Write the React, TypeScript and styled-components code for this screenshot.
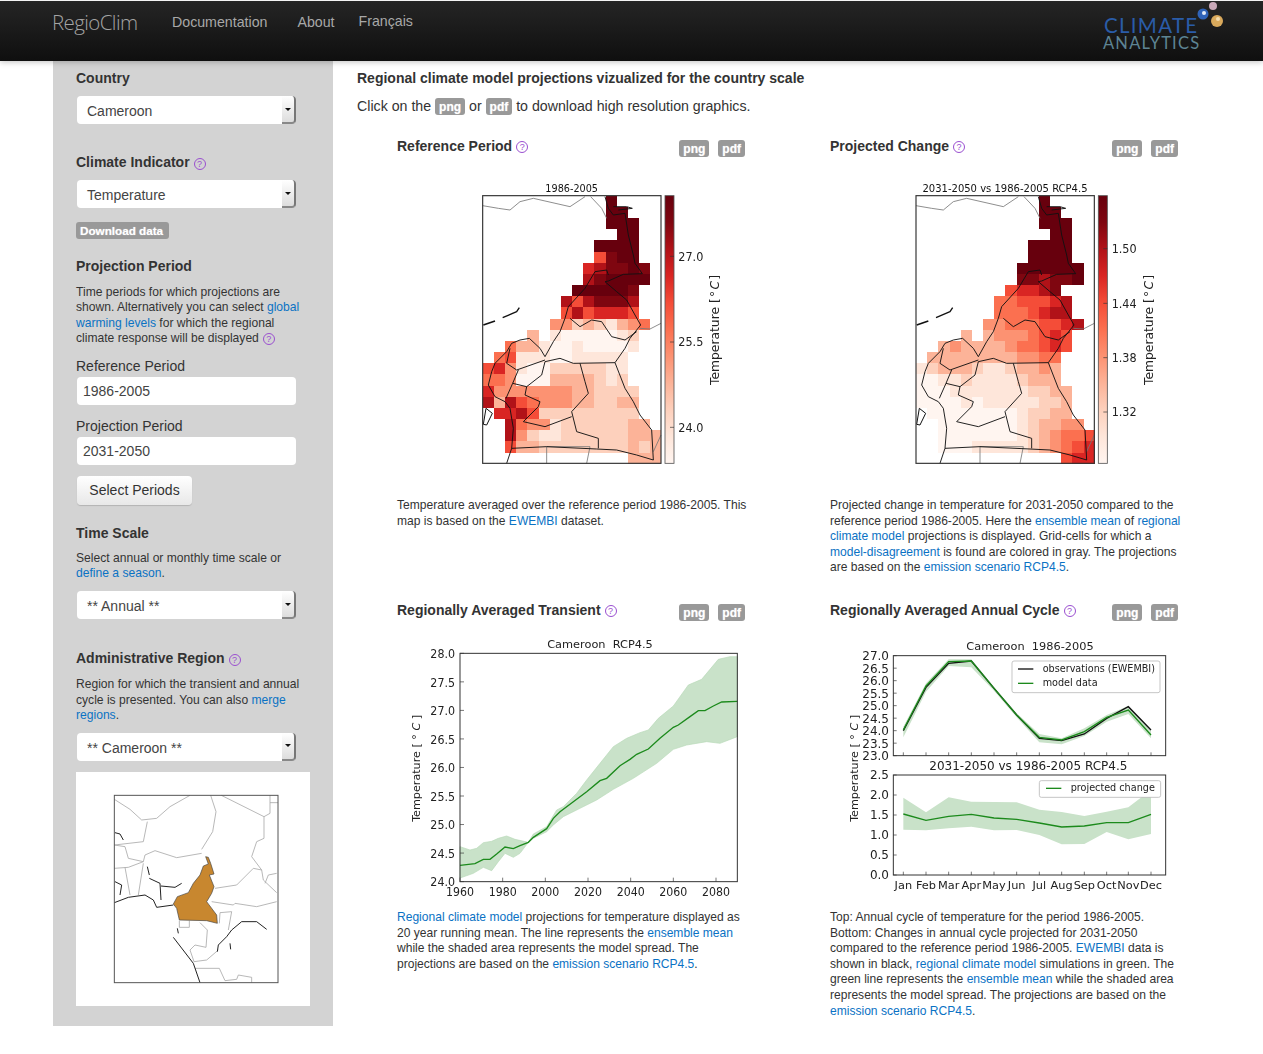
import React from 'react';
import styled, { createGlobalStyle } from 'styled-components';

const GlobalStyle = createGlobalStyle`
  html, body {
    margin: 0;
    padding: 0;
    background: #fff;
    font-family: "Liberation Sans", Arial, sans-serif;
    color: #333;
  }
`;

const Page = styled.div`
  width: 1263px;
  height: 1054px;
  overflow: hidden;
`;

const NavBar = styled.header`
  height: 60px;
  border-top: 1px solid #f4f4f4;
  background: linear-gradient(#252525, #0f0f0f);
  box-shadow: 0 1px 6px rgba(0, 0, 0, 0.25);
  display: flex;
  align-items: flex-start;
  position: relative;
`;

const Brand = styled.div`
  margin-left: 52px;
  margin-top: 8px;
  width: 120px;
  font-size: 20.5px;
  line-height: 26px;
  letter-spacing: -0.6px;
  color: #a4a4a4;
  font-family: "Open Sans", "Liberation Sans", sans-serif;
  font-weight: 300;
`;

const NavLink = styled.a<{ $left: number; $top?: number }>`
  margin-left: ${(p) => p.$left}px;
  margin-top: ${(p) => p.$top ?? 12}px;
  font-size: 14.2px;
  line-height: 18px;
  color: #a8a8a8;
`;

const LogoSlot = styled.div`
  margin-left: auto;
  margin-right: 32px;
  width: 130px;
  height: 60px;
`;

const Main = styled.div`
  display: flex;
  align-items: flex-start;
`;

const Sidebar = styled.aside`
  width: 257px;
  height: 958px;
  margin-left: 53px;
  padding: 7px 0 0 23px;
  background: #d3d3d3;
`;

const Heading = styled.h4<{ $top?: number }>`
  margin: ${(p) => p.$top ?? 0}px 0 0;
  font-size: 14px;
  line-height: 20px;
  font-weight: bold;
  color: #333;
`;

const SideText = styled.p<{ $top?: number }>`
  margin: ${(p) => p.$top ?? 0}px 0 0;
  width: 228px;
  font-size: 12.1px;
  line-height: 15.4px;
  color: #333;
`;

const Link = styled.a`
  color: #0a72c4;
`;

const HelpMark = styled.span`
  display: inline-block;
  box-sizing: border-box;
  width: 12px;
  height: 12px;
  margin-left: 4px;
  border: 1px solid #9a4fd0;
  border-radius: 50%;
  color: #9a4fd0;
  font-size: 9px;
  line-height: 10px;
  font-weight: normal;
  text-align: center;
  vertical-align: 0;
`;

const SelectBox = styled.div<{ $top?: number }>`
  box-sizing: border-box;
  width: 219px;
  height: 28px;
  margin: ${(p) => p.$top ?? 0}px 0 0 1px;
  display: flex;
  align-items: center;
  justify-content: space-between;
  background: #fff;
  border-radius: 4px;
  font-size: 14px;
  color: #444;
`;

const SelectValue = styled.span`
  padding: 2px 0 0 10px;
`;

const SelectArrow = styled.span`
  box-sizing: border-box;
  width: 14px;
  height: 28px;
  display: flex;
  align-items: center;
  justify-content: center;
  background: linear-gradient(#fff, #ddd);
  border-right: 2px solid #777;
  border-bottom: 2px solid #888;
  border-radius: 0 4px 4px 0;
  &::after {
    content: '';
    border-left: 3px solid transparent;
    border-right: 3px solid transparent;
    border-top: 3px solid #111;
  }
`;

const FieldLabel = styled.div<{ $top: number }>`
  margin-top: ${(p) => p.$top}px;
  font-size: 14px;
  line-height: 18px;
  color: #333;
`;

const TextInput = styled.div`
  box-sizing: border-box;
  width: 219px;
  height: 28px;
  margin: 2px 0 0 1px;
  padding-left: 6px;
  background: #fff;
  border-radius: 4px;
  font-size: 14px;
  line-height: 28px;
  color: #444;
`;

const SelectButton = styled.div`
  box-sizing: border-box;
  width: 115px;
  height: 29px;
  margin: 11px 0 0 1px;
  background: linear-gradient(#fff, #e8e8e8);
  border-radius: 4px;
  box-shadow: 0 1px 1px rgba(0, 0, 0, 0.15);
  font-size: 14px;
  line-height: 29px;
  text-align: center;
  color: #333;
`;

const Badge = styled.span`
  display: inline-block;
  height: 17px;
  padding: 0 4px;
  background: #999;
  border-radius: 3px;
  color: #fff;
  font-size: 12px;
  line-height: 18px;
  font-weight: bold;
  text-shadow: 0 0 1px rgba(255, 255, 255, 0.6);
`;

const DownloadBadge = styled(Badge)`
  display: block;
  width: 85px;
  margin-top: 14px;
  font-size: 11.7px;
`;

const LocatorBox = styled.div`
  width: 234px;
  height: 234px;
  margin-top: 11px;
  background: #fff;
  svg {
    display: block;
    filter: blur(0.3px);
  }
`;

const Content = styled.main`
  margin-left: 24px;
  padding-top: 7px;
`;

const PageTitle = styled.h1`
  margin: 0;
  font-size: 14px;
  line-height: 20px;
  font-weight: bold;
  color: #333;
`;

const Intro = styled.p`
  margin: 8px 0 0;
  font-size: 14.2px;
  line-height: 20px;
  color: #333;
`;

const PanelGrid = styled.div`
  display: grid;
  grid-template-columns: 348px 348px;
  grid-template-rows: 464px auto;
  column-gap: 85px;
  margin: 21px 0 0 40px;
`;

const Panel = styled.section``;

const PanelHead = styled.div`
  display: flex;
  align-items: center;
  height: 20px;
`;

const PanelTitle = styled.h3`
  margin: 0 0 2px;
  font-size: 14px;
  line-height: 20px;
  font-weight: bold;
  color: #333;
`;

const Downloads = styled.div`
  margin: 2px 0 0 auto;
  display: flex;
  gap: 9px;
`;

const Figure = styled.div<{ $left: number; $height: number; $top: number }>`
  margin: ${(p) => p.$top}px 0 0 ${(p) => p.$left}px;
  height: ${(p) => p.$height}px;
  svg {
    display: block;
    filter: blur(0.35px);
  }
`;

const Caption = styled.p<{ $top: number }>`
  margin: ${(p) => p.$top}px 0 0;
  width: 352px;
  font-size: 12.05px;
  line-height: 15.6px;
  color: #333;
`;

const PALETTE = ['#fff5f0', '#fee6da', '#fdd0bc', '#fcb398', '#fc9272', '#fb7050', '#f44d38', '#d92523', '#b11218', '#7f0610', '#67000d'];
const CHART_FONT = '"DejaVu Sans", sans-serif';

const REF_GRID = [
  '...........a....',
  '...........aa...',
  '...........aaa..',
  '............aa..',
  '..........aaaa..',
  '..........69aa..',
  '.........7899a9.',
  '.........89aaaa.',
  '........aaaaa9..',
  '.......8689998..',
  '.......6867776..',
  '......442321345.',
  '....3.10000012..',
  '..533100100001..',
  '.561110011111...',
  '6741002222211...',
  '5540003333212...',
  '74444444332222..',
  '83865444332233..',
  '.7786222222222..',
  '..8544122222233.',
  '..84211222222333',
  '..63322222222323',
  '.............333',
];

const CHANGE_GRID = [
  '...........a....',
  '...........aa...',
  '...........aaa..',
  '............aa..',
  '..........aaaa..',
  '..........aaaa..',
  '.........aaaaaa.',
  '.........99899a.',
  '........67789...',
  '.......5566678..',
  '.......5556788..',
  '......445556678.',
  '....3.34445676..',
  '..343333455676..',
  '.333333334455...',
  '1233321123343...',
  '0011211112333...',
  '00011111112233..',
  '00001011111223..',
  '.0000000012233..',
  '..0000000123344.',
  '..00000001234556',
  '..00011111234567',
  '.............677',
];

const BLACK_LINES = [
  '405,65 415,100 430,120 465,115 475,180 490,240 495,265 517,296 460,298 415,318 405,320 440,350 470,375 495,420 512,450 480,490 465,520 435,563 465,640 490,680 510,720 545,765 550,855 500,840 440,825 380,822 230,815 125,820 130,760 120,700 105,680 75,665 55,630 65,590 75,565 110,530 125,505 150,495 178,490 210,520 225,545 250,500 270,470 285,430 295,395 345,340 375,290 410,285 415,300',
  '300,430 330,455 365,435 395,440 425,485 465,495 500,470',
  '225,560 270,550 310,565 435,563',
  '330,565 345,620 355,655 305,710 320,770 385,790 385,820',
  '120,520 110,565 140,585 225,555',
  '145,585 128,625 170,635 215,600 225,560',
  '128,625 108,670',
  '170,635 165,660 210,680 205,695 160,740 225,755 305,725',
  '125,820 110,865',
  '430,95 470,95 487,100 445,105',
];

const GRAY_LINES = [
  '38,92 85,100 120,105 150,80 190,70 300,95 345,65',
  '362,65 395,100 410,130',
  '510,460 540,462 573,445',
  '230,865 230,815 360,815 350,865',
  '573,780 550,830',
];

const AxisLabel: React.FC<{ x: number; y: number }> = ({ x, y }) => (
  <text transform={`translate(${x} ${y}) rotate(-90)`} fontFamily={CHART_FONT} fontSize={33.5} textAnchor="middle" fill="#222">
    Temperature [ ° <tspan fontStyle="italic">C</tspan> ]
  </text>
);

const MapAxisLabel: React.FC<{ x: number }> = ({ x }) => (
  <text transform={`translate(${x} 465) rotate(-90)`} fontFamily={CHART_FONT} fontSize={37} textAnchor="middle" fill="#222">
    {'Temperature [\u200a°\u200a'}<tspan fontStyle="italic">C</tspan>{'\u200a]'}
  </text>
);

const HeatMap: React.FC<{ grid: string[]; title: string; axisLeft: number; ticks: [string, number][]; colorLeft: number; titleSize: number }> = ({
  grid,
  title,
  axisLeft,
  ticks,
  colorLeft,
  titleSize,
}) => {
  const dx = axisLeft - 38;
  return (
    <svg width={270} height={300} viewBox="0 0 810 900">
      <defs>
        <linearGradient id={`bar${axisLeft}`} x1="0" y1="1" x2="0" y2="0">
          {PALETTE.map((c, i) => (
            <stop key={c} offset={i / 10} stopColor={c} />
          ))}
        </linearGradient>
      </defs>
      <text x={axisLeft + 267} y={50} fontFamily={CHART_FONT} fontSize={titleSize} textAnchor="middle" fill="#111">
        {title}
      </text>
      <g shapeRendering="crispEdges">
        {grid.map((row, r) =>
          row.split('').map((ch, c) =>
            ch === '.' ? null : (
              <rect
                key={`${r}-${c}`}
                x={axisLeft + c * 33.5}
                y={62 + r * 33.5}
                width={33.5}
                height={33.5}
                fill={PALETTE[parseInt(ch, 16)]}
              />
            ),
          ),
        )}
      </g>
      <g fill="none" strokeLinejoin="round" transform={`translate(${dx} 0)`}>
        {GRAY_LINES.map((p) => (
          <polyline key={p} points={p} stroke="#777" strokeWidth={2.5} />
        ))}
        {BLACK_LINES.map((p) => (
          <polyline key={p} points={p} stroke="#111" strokeWidth={2.8} />
        ))}
        <polyline points="40,450 75,438" stroke="#111" strokeWidth={5} />
        <polyline points="98,428 140,410 148,398" stroke="#111" strokeWidth={4} />
        <polygon points="48,700 67,715 50,750 40,748" stroke="#111" strokeWidth={3} fill="#fff" />
      </g>
      <rect x={axisLeft} y={62} width={535} height={803} fill="none" stroke="#333" strokeWidth={3.5} />
      <rect x={colorLeft} y={62} width={27} height={803} fill={`url(#bar${axisLeft})`} stroke="#555" strokeWidth={2.5} />
      {ticks.map(([label, y]) => (
        <g key={label}>
          <line x1={colorLeft + 15} x2={colorLeft + 27} y1={y} y2={y} stroke="#333" strokeWidth={2} />
          <text x={colorLeft + 40} y={y + 13} fontFamily={CHART_FONT} fontSize={36} textLength={75} lengthAdjust="spacingAndGlyphs" fill="#222">
            {label}
          </text>
        </g>
      ))}
      <MapAxisLabel x={colorLeft + 163} />
    </svg>
  );
};

const pts = (list: number[][]) => list.map((p) => p.join(',')).join(' ');

const TR_MEAN = [[180,706],[225,701],[250,688],[270,688],[290,672],[315,651],[340,656],[360,647],[385,637],[400,622],[440,596],[460,565],[480,545],[520,515],[560,485],[600,452],[620,445],[660,407],[690,388],[710,373],[745,357],[780,325],[820,292],[835,285],[870,260],[895,242],[915,242],[940,228],[965,216],[1012,214]];
const TR_UP = [[180,650],[210,660],[230,655],[250,638],[275,634],[295,625],[320,618],[345,628],[385,637],[400,612],[440,590],[470,540],[490,530],[530,490],[560,450],[600,400],[640,350],[680,325],[720,308],[745,300],[775,265],[820,228],[865,165],[905,148],[955,88],[990,80],[1012,80]];
const TR_LOW = [[180,744],[220,730],[250,712],[275,722],[295,695],[315,670],[340,682],[360,670],[385,637],[400,625],[440,605],[460,585],[490,560],[540,535],[590,510],[640,478],[700,445],[770,400],[820,358],[860,345],[920,335],[960,340],[1012,320]];

const TransientChart: React.FC = () => (
  <svg width={350} height={270} viewBox="0 0 1050 810" fontFamily={CHART_FONT} fill="#222">
    <text x={600} y={53} fontSize={34} textAnchor="middle">{'Cameroon\u00a0\u00a0RCP4.5'}</text>
    <polygon points={pts([...TR_UP, ...[...TR_LOW].reverse()])} fill="#c9e2c9" stroke="#b8d9b8" strokeWidth={2} />
    <polyline points={pts(TR_MEAN)} fill="none" stroke="#1c8a1c" strokeWidth={4} />
    <rect x={180} y={70} width={832} height={685} fill="none" stroke="#333" strokeWidth={3} />
    {['28.0', '27.5', '27.0', '26.5', '26.0', '25.5', '25.0', '24.5', '24.0'].map((t, i) => (
      <g key={t}>
        <line x1={180} x2={192} y1={70 + i * 85.6} y2={70 + i * 85.6} stroke="#333" strokeWidth={2} />
        <text x={165} y={84 + i * 85.6} fontSize={38} textAnchor="end" textLength={74} lengthAdjust="spacingAndGlyphs">{t}</text>
      </g>
    ))}
    {[1960, 1980, 2000, 2020, 2040, 2060, 2080].map((t, i) => (
      <g key={t}>
        <line x1={180 + i * 128} x2={180 + i * 128} y1={755} y2={743} stroke="#333" strokeWidth={2} />
        <text x={180 + i * 128} y={798} fontSize={38} textAnchor="middle" textLength={84} lengthAdjust="spacingAndGlyphs">{t}</text>
      </g>
    ))}
    <AxisLabel x={60} y={415} />
  </svg>
);

const MONTH_X = [190, 258, 326, 394, 462, 530, 598, 665, 733, 800, 865, 933];
const MONTHS = ['Jan', 'Feb', 'Mar', 'Apr', 'May', 'Jun', 'Jul', 'Aug', 'Sep', 'Oct', 'Nov', 'Dec'];
const series = (ys: number[]) => ys.map((y, i) => [MONTH_X[i], y]);
const back = (ys: number[]) => series(ys).reverse();

const OBS = [302, 172, 100, 93, 175, 255, 325, 332, 312, 265, 230, 300];
const MODEL = [300, 168, 95, 93, 175, 255, 322, 330, 305, 262, 240, 315];
const MODEL_UP = [290, 160, 88, 88, 170, 250, 312, 325, 295, 255, 228, 300];
const MODEL_LOW = [322, 185, 108, 112, 182, 262, 337, 343, 318, 275, 252, 325];
const CH_MEAN = [552, 571, 559, 553, 564, 568, 579, 591, 588, 578, 578, 553];
const CH_UP = [503, 547, 502, 515, 516, 517, 539, 546, 558, 545, 532, 480];
const CH_LOW = [599, 601, 595, 590, 601, 600, 615, 643, 642, 606, 628, 612];

const AnnualChart: React.FC = () => (
  <svg width={340} height={270} viewBox="0 0 1020 810" fontFamily={CHART_FONT} fill="#222">
    <text x={570} y={60} fontSize={34} textAnchor="middle">{'Cameroon\u00a0\u00a01986-2005'}</text>
    <polygon points={pts([...series(MODEL_UP), ...back(MODEL_LOW)])} fill="#c9e2c9" />
    <polyline points={pts(series(OBS))} fill="none" stroke="#111" strokeWidth={4} />
    <polyline points={pts(series(MODEL))} fill="none" stroke="#1c8a1c" strokeWidth={4} />
    <rect x={160} y={77} width={817} height={300} fill="none" stroke="#333" strokeWidth={3} />
    {['27.0', '26.5', '26.0', '25.5', '25.0', '24.5', '24.0', '23.5', '23.0'].map((t, i) => (
      <g key={t}>
        <line x1={160} x2={170} y1={77 + i * 37.5} y2={77 + i * 37.5} stroke="#333" strokeWidth={2} />
        <text x={147} y={90 + i * 37.5} fontSize={36} textAnchor="end">{t}</text>
      </g>
    ))}
    <rect x={516} y={93} width={444} height={95} rx={6} fill="#fff" stroke="#bbb" strokeWidth={2.5} />
    <line x1={534} x2={580} y1={117} y2={117} stroke="#111" strokeWidth={4} />
    <line x1={534} x2={580} y1={160} y2={160} stroke="#1c8a1c" strokeWidth={4} />
    <text x={608} y={126} fontSize={29}>observations (EWEMBI)</text>
    <text x={608} y={169} fontSize={29}>model data</text>

    <text x={565} y={420} fontSize={36} textAnchor="middle">2031-2050 vs 1986-2005 RCP4.5</text>
    <polygon points={pts([...series(CH_UP), ...back(CH_LOW)])} fill="#c9e2c9" />
    <polyline points={pts(series(CH_MEAN))} fill="none" stroke="#1c8a1c" strokeWidth={4} />
    <rect x={160} y={435} width={817} height={300} fill="none" stroke="#333" strokeWidth={3} />
    {['2.5', '2.0', '1.5', '1.0', '0.5', '0.0'].map((t, i) => (
      <g key={t}>
        <line x1={160} x2={170} y1={435 + i * 60} y2={435 + i * 60} stroke="#333" strokeWidth={2} />
        <text x={147} y={448 + i * 60} fontSize={36} textAnchor="end">{t}</text>
      </g>
    ))}
    <rect x={598} y={452} width={364} height={50} rx={6} fill="#fff" stroke="#bbb" strokeWidth={2.5} />
    <line x1={618} x2={664} y1={475} y2={475} stroke="#1c8a1c" strokeWidth={4} />
    <text x={692} y={484} fontSize={29}>projected change</text>
    {MONTHS.map((m, i) => (
      <g key={m}>
        <line x1={MONTH_X[i]} x2={MONTH_X[i]} y1={377} y2={367} stroke="#333" strokeWidth={2} />
        <line x1={MONTH_X[i]} x2={MONTH_X[i]} y1={735} y2={725} stroke="#333" strokeWidth={2} />
        <text x={MONTH_X[i]} y={776} fontSize={34} textAnchor="middle">{m}</text>
      </g>
    ))}
    <AxisLabel x={54} y={415} />
  </svg>
);

const LOCATOR_GRAY = [
  '163,118 210,148 245,180 290,175 330,140 390,106',
  '452,106 468,155 458,215 425,268',
  '484,106 612,170 612,235 590,245 575,290 605,330 610,360 650,398',
  '605,330 580,325 530,375 465,385',
  '615,370 625,345 650,340',
  '630,106 630,160 612,170',
  '630,128 654,128',
  '163,255 250,245 262,185',
  '163,255 195,260 205,295 250,305 255,285 285,272 350,293 425,280',
  '163,325 205,322 250,305',
  '195,322 210,405',
  '235,405 250,310',
  '455,425 520,435 525,430 590,440 650,425',
  '478,490 480,458 515,455 505,510',
  '358,482 358,502 388,502 388,482',
  '420,488 442,510 438,562 405,555 390,570 402,605 440,600 475,570',
  '405,625 478,625 495,662 530,658 535,645 575,652 575,668',
];

const LOCATOR_BLACK = [
  '163,428 205,412 255,405 280,420 290,442 340,435',
  '340,532 400,610 420,668',
  '165,218 180,222 190,240',
  '268,355 300,370 303,420',
  '303,378 345,382 365,370',
  '262,320 268,345',
  '620,508 590,485 545,485 515,510 500,530 475,555 472,575',
  '165,365 185,375 180,405',
  '352,505 355,520',
  '510,550 512,568',
];

const CAMEROON = '340,432 352,410 385,398 400,370 420,345 430,318 445,312 437,290 445,292 452,310 462,342 448,345 462,380 455,400 440,425 470,465 472,490 440,482 358,480 350,445';

const LocatorMap: React.FC = () => (
  <svg width={234} height={234} viewBox="48 36 702 702">
    <g fill="none" stroke="#aaa" strokeWidth={2.5}>
      {LOCATOR_GRAY.map((p) => (
        <polyline key={p} points={p} />
      ))}
    </g>
    <g fill="none" stroke="#111" strokeWidth={2.8}>
      {LOCATOR_BLACK.map((p) => (
        <polyline key={p} points={p} />
      ))}
    </g>
    <polygon points={CAMEROON} fill="#c8872f" stroke="#444" strokeWidth={2} />
    <rect x={163} y={106} width={491} height={562} fill="none" stroke="#555" strokeWidth={3} />
  </svg>
);

const Logo: React.FC = () => (
  <svg width={130} height={60} viewBox="0 0 130 60">
    <text x={3} y={32} fontFamily="Lato, sans-serif" fontSize={20.5} letterSpacing={1.3} fill="#2a5ca8">CLIMATE</text>
    <text x={2} y={47.5} fontFamily="Lato, sans-serif" fontSize={16.5} letterSpacing={1.2} fill="#5d8494">ANALYTICS</text>
    <circle cx={102} cy={13} r={5.5} fill="#2f63b8" />
    <circle cx={103} cy={12} r={2} fill="#e4ecf8" />
    <circle cx={112} cy={5} r={4} fill="#c9a8b8" />
    <circle cx={116} cy={20} r={6} fill="#d9a95c" />
    <circle cx={117} cy={18} r={2} fill="#f3dcae" />
  </svg>
);

const Help: React.FC = () => <HelpMark>?</HelpMark>;

const Select: React.FC<{ value: string; top?: number }> = ({ value, top }) => (
  <SelectBox $top={top}>
    <SelectValue>{value}</SelectValue>
    <SelectArrow />
  </SelectBox>
);

const PanelHeader: React.FC<{ title: string }> = ({ title }) => (
  <PanelHead>
    <PanelTitle>{title}</PanelTitle>
    <Help />
    <Downloads>
      <Badge>png</Badge>
      <Badge>pdf</Badge>
    </Downloads>
  </PanelHead>
);

const App: React.FC = () => {
  return (
    <Page>
      <GlobalStyle />
      <NavBar>
        <Brand>RegioClim</Brand>
        <NavLink $left={0}>Documentation</NavLink>
        <NavLink $left={30}>About</NavLink>
        <NavLink $left={24} $top={11}>Français</NavLink>
        <LogoSlot>
          <Logo />
        </LogoSlot>
      </NavBar>
      <Main>
        <Sidebar>
          <Heading>Country</Heading>
          <Select value="Cameroon" top={8} />
          <Heading $top={28}>Climate Indicator<Help /></Heading>
          <Select value="Temperature" top={8} />
          <DownloadBadge>Download data</DownloadBadge>
          <Heading $top={17}>Projection Period</Heading>
          <SideText $top={9}>
            Time periods for which projections are shown. Alternatively you can select <Link>global warming levels</Link> for which the regional climate response will be displayed<Help />
          </SideText>
          <FieldLabel $top={10}>Reference Period</FieldLabel>
          <TextInput>1986-2005</TextInput>
          <FieldLabel $top={12}>Projection Period</FieldLabel>
          <TextInput>2031-2050</TextInput>
          <SelectButton>Select Periods</SelectButton>
          <Heading $top={18}>Time Scale</Heading>
          <SideText $top={8}>
            Select annual or monthly time scale or <Link>define a season</Link>.
          </SideText>
          <Select value="** Annual **" top={10} />
          <Heading $top={29}>Administrative Region<Help /></Heading>
          <SideText $top={9}>
            Region for which the transient and annual cycle is presented. You can also <Link>merge regions</Link>.
          </SideText>
          <Select value="** Cameroon **" top={9} />
          <LocatorBox>
            <LocatorMap />
          </LocatorBox>
        </Sidebar>
        <Content>
          <PageTitle>Regional climate model projections vizualized for the country scale</PageTitle>
          <Intro>
            Click on the <Badge>png</Badge> or <Badge>pdf</Badge> to download high resolution graphics.
          </Intro>
          <PanelGrid>
            <Panel>
              <PanelHeader title="Reference Period" />
              <Figure $left={73} $top={18} $height={300}>
                <HeatMap
                  grid={REF_GRID}
                  title="1986-2005"
                  titleSize={29}
                  axisLeft={38}
                  colorLeft={585}
                  ticks={[['27.0', 244], ['25.5', 501], ['24.0', 757]]}
                />
              </Figure>
              <Caption $top={23}>
                Temperature averaged over the reference period 1986-2005. This map is based on the <Link>EWEMBI</Link> dataset.
              </Caption>
            </Panel>
            <Panel>
              <PanelHeader title="Projected Change" />
              <Figure $left={70} $top={18} $height={300}>
                <HeatMap
                  grid={CHANGE_GRID}
                  title="2031-2050 vs 1986-2005 RCP4.5"
                  titleSize={30}
                  axisLeft={48}
                  colorLeft={595}
                  ticks={[['1.50', 221], ['1.44', 385], ['1.38', 548], ['1.32', 711]]}
                />
              </Figure>
              <Caption $top={23}>
                Projected change in temperature for 2031-2050 compared to the reference period 1986-2005. Here the <Link>ensemble mean</Link> of <Link>regional climate model</Link> projections is displayed. Grid-cells for which a <Link>model-disagreement</Link> is found are colored in gray. The projections are based on the <Link>emission scenario RCP4.5</Link>.
              </Caption>
            </Panel>
            <Panel>
              <PanelHeader title="Regionally Averaged Transient" />
              <Figure $left={3} $top={9} $height={270}>
                <TransientChart />
              </Figure>
              <Caption $top={10}>
                <Link>Regional climate model</Link> projections for temperature displayed as 20 year running mean. The line represents the <Link>ensemble mean</Link> while the shaded area represents the model spread. The projections are based on the <Link>emission scenario RCP4.5</Link>.
              </Caption>
            </Panel>
            <Panel>
              <PanelHeader title="Regionally Averaged Annual Cycle" />
              <Figure $left={10} $top={9} $height={270}>
                <AnnualChart />
              </Figure>
              <Caption $top={10}>
                Top: Annual cycle of temperature for the period 1986-2005. Bottom: Changes in annual cycle projected for 2031-2050 compared to the reference period 1986-2005. <Link>EWEMBI</Link> data is shown in black, <Link>regional climate model</Link> simulations in green. The green line represents the <Link>ensemble mean</Link> while the shaded area represents the model spread. The projections are based on the <Link>emission scenario RCP4.5</Link>.
              </Caption>
            </Panel>
          </PanelGrid>
        </Content>
      </Main>
    </Page>
  );
};

export default App;
